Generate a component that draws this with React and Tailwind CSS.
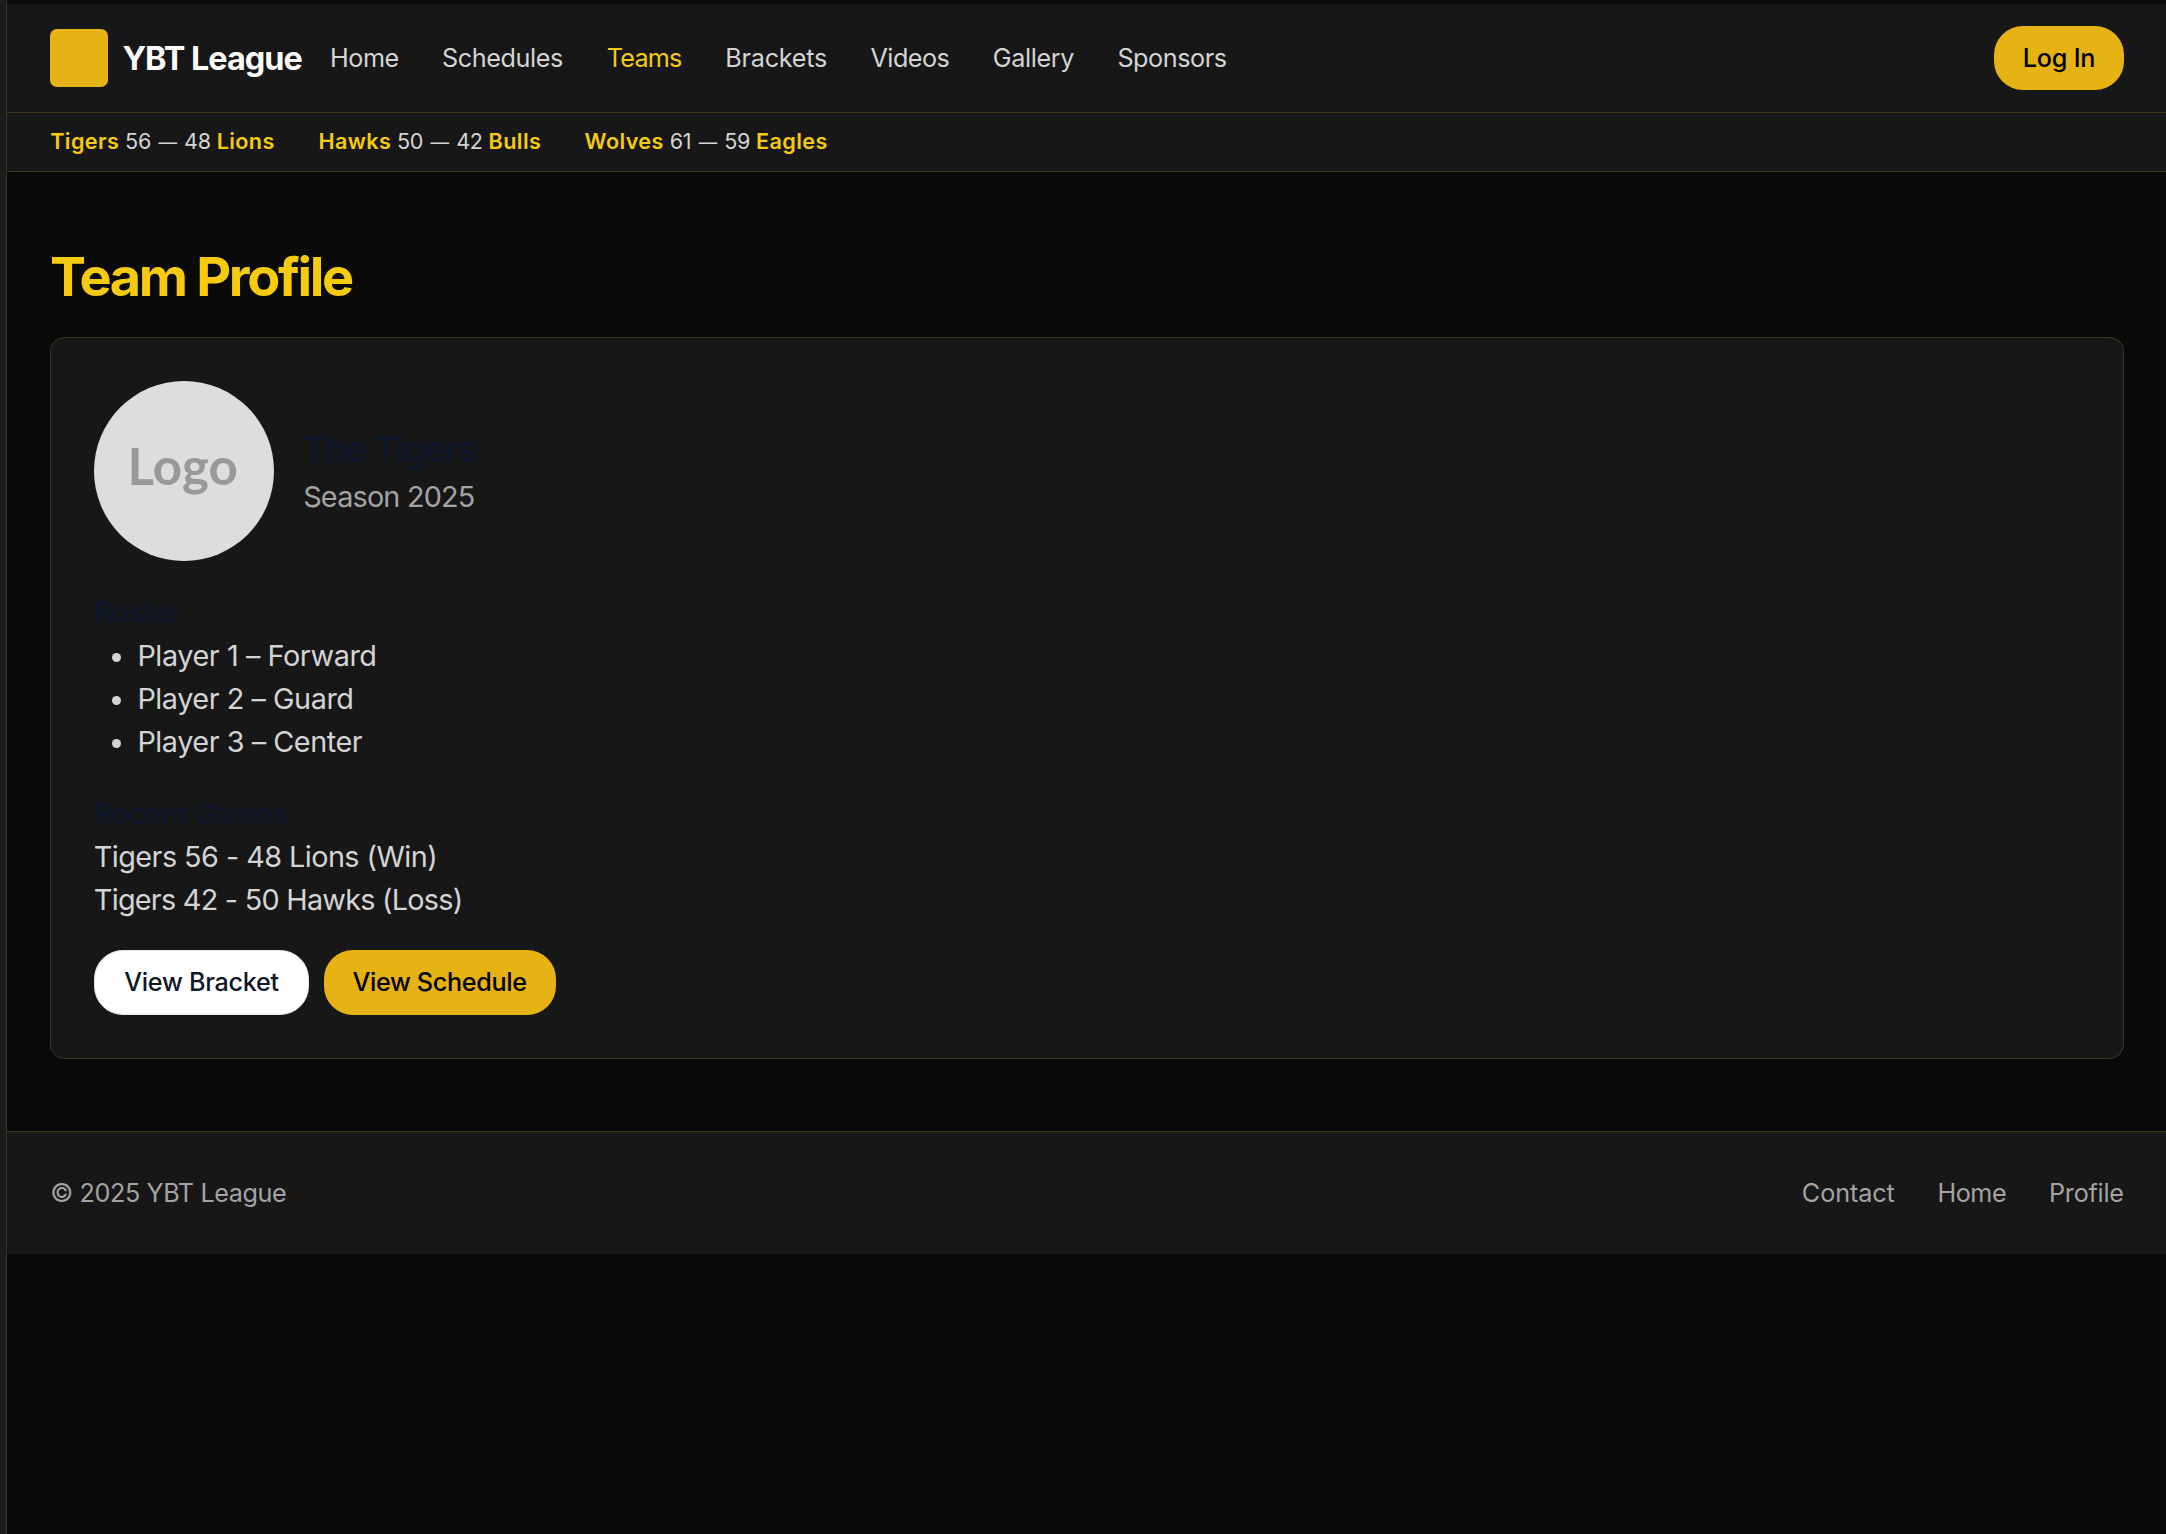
const navLinks = [
  { label: "Home", cls: "w-[68.8px] tracking-[-0.45px]" },
  { label: "Schedules", cls: "w-[121.5px] tracking-[-0.4px]" },
  { label: "Teams", cls: "w-[75.5px] tracking-[-0.74px] text-[#f6cb0f]" },
  { label: "Brackets", cls: "w-[102px] tracking-[-0.25px]" },
  { label: "Videos", cls: "w-[79px] tracking-[-0.55px]" },
  { label: "Gallery", cls: "w-[81.5px] tracking-[-0.35px]" },
  { label: "Sponsors", cls: "w-[110px] tracking-[-0.45px]" },
];

const scores = [
  { home: "Tigers", from: 56, to: 48, away: "Lions", cls: "w-[225px]" },
  { home: "Hawks", from: 50, to: 42, away: "Bulls", cls: "w-[223px]" },
  { home: "Wolves", from: 61, to: 59, away: "Eagles", cls: "w-[244px]" },
];

const roster = [
  { text: "Player 1 – Forward", cls: "tracking-[-0.42px]" },
  { text: "Player 2 – Guard", cls: "tracking-[-0.45px]" },
  { text: "Player 3 – Center", cls: "tracking-[-0.45px]" },
];

const footerLinks = [
  { label: "Contact", cls: "w-[92.4px] tracking-[-0.1px]" },
  { label: "Home", cls: "w-[68.4px] tracking-[-0.45px]" },
  { label: "Profile", cls: "w-[75px] tracking-[-0.25px]" },
];

function Header() {
  return (
    <header className="flex h-[109px] items-center border-b border-[#413517] bg-[#171717] pr-[42px] pl-[43px]">
      <div className="h-[58px] w-[58px] rounded-[7px] bg-[#e6b214]" />
      <div className="ml-[14.4px] w-[207.6px] pt-[2px] text-[32.4px] font-bold tracking-[-0.98px] text-[#fafafa]">YBT League</div>
      <nav className="flex gap-[43.2px] pt-[2px] text-[25.2px] text-[#d4d4d4]">
        {navLinks.map((l) => (
          <a key={l.label} className={l.cls}>{l.label}</a>
        ))}
      </nav>
      <button className="ml-auto h-16 w-[130px] rounded-[28.8px] bg-[#e6b214] pt-[2px] text-[25.2px] font-medium tracking-[-0.23px] text-black">
        Log In
      </button>
    </header>
  );
}

function Ticker() {
  return (
    <div className="flex h-[59px] items-center gap-[43.2px] border-b border-[#413517] bg-[#171717] pb-px pl-[43.2px] text-[21.6px] text-[#d4d4d4]">
      {scores.map((s) => (
        <div key={s.home} className={s.cls + " whitespace-nowrap tracking-[-0.25px]"}>
          <span className="font-semibold tracking-[0.4px] text-[#f6cb0f]">{s.home}</span> {s.from}{" "}
          <span className="mx-[1.5px] text-[18.5px]">—</span> {s.to}{" "}
          <span className="font-semibold tracking-[0.4px] text-[#f6cb0f]">{s.away}</span>
        </div>
      ))}
    </div>
  );
}

function TeamCard() {
  return (
    <section className="mt-[28.4px] h-[722px] rounded-[14.4px] border border-[#413517] bg-[#171717] px-[42.8px] pt-[43px] text-[28.8px] leading-[43.2px] text-[#d4d4d4]">
      <div className="flex items-center gap-[28.8px]">
        <div className="flex h-[180px] w-[180px] justify-center rounded-full bg-[#dddddd] pr-[2px] font-['Lato',sans-serif] text-[51px] leading-[170px] font-bold tracking-[0.1px] text-[#999999]">
          Logo
        </div>
        <div>
          <h2 className="text-[36px] leading-[50.4px] font-semibold tracking-[-1.3px] text-[#0f172a]">The Tigers</h2>
          <p className="pl-[0.6px] tracking-[-0.8px] text-[#a3a3a3]">Season 2025</p>
        </div>
      </div>
      <h3 className="mt-[28.8px] font-semibold tracking-[-0.3px] text-[#0f172a]">Roster</h3>
      <ul className="list-disc pt-[0.4px] pl-[43.6px]">
        {roster.map((p) => (
          <li key={p.text} className={p.cls}>{p.text}</li>
        ))}
      </ul>
      <h3 className="mt-[28.4px] font-semibold tracking-[-0.55px] text-[#0f172a]">Recent Games</h3>
      <p className="tracking-[-0.55px]">Tigers 56 - 48 Lions (Win)</p>
      <p className="tracking-[-0.74px]">Tigers 42 - 50 Hawks (Loss)</p>
      <div className="mt-[28.8px] flex gap-[14.4px] text-[25.2px] font-medium">
        <button className="h-[65px] w-[215.4px] rounded-[28.8px] border border-[#e2e8f0] bg-white tracking-[-0.3px] text-[#0f172a]">
          View Bracket
        </button>
        <button className="h-[65px] w-[232px] rounded-[28.8px] bg-[#e6b214] tracking-[-0.34px] text-black">
          View Schedule
        </button>
      </div>
    </section>
  );
}

function Footer() {
  return (
    <footer className="mt-[72px] flex h-[123px] items-center justify-between border-t border-[#413517] bg-[#171717] pt-[2px] pr-[42px] pl-[43.2px] text-[25.2px] text-[#a3a3a3]">
      <span className="tracking-[-0.4px]">© 2025 YBT League</span>
      <div className="flex gap-[43.2px]">
        {footerLinks.map((l) => (
          <a key={l.label} className={l.cls}>{l.label}</a>
        ))}
      </div>
    </footer>
  );
}

export default function App() {
  return (
    <div className="flex h-[1534px] w-[2166px] overflow-hidden bg-[#0a0a0a] font-['Inter',sans-serif]">
      <div className="w-[7px] shrink-0 border-r border-[#333333] bg-[#1c1c1c]" />
      <div className="flex-1 pt-1">
        <Header />
        <Ticker />
        <main className="pt-[73px] pr-[42px] pl-[43px]">
          <h1 className="-mb-px text-[54px] leading-[64.8px] font-bold tracking-[-2.35px] text-[#f6cb0f]">Team Profile</h1>
          <TeamCard />
        </main>
        <Footer />
      </div>
    </div>
  );
}
